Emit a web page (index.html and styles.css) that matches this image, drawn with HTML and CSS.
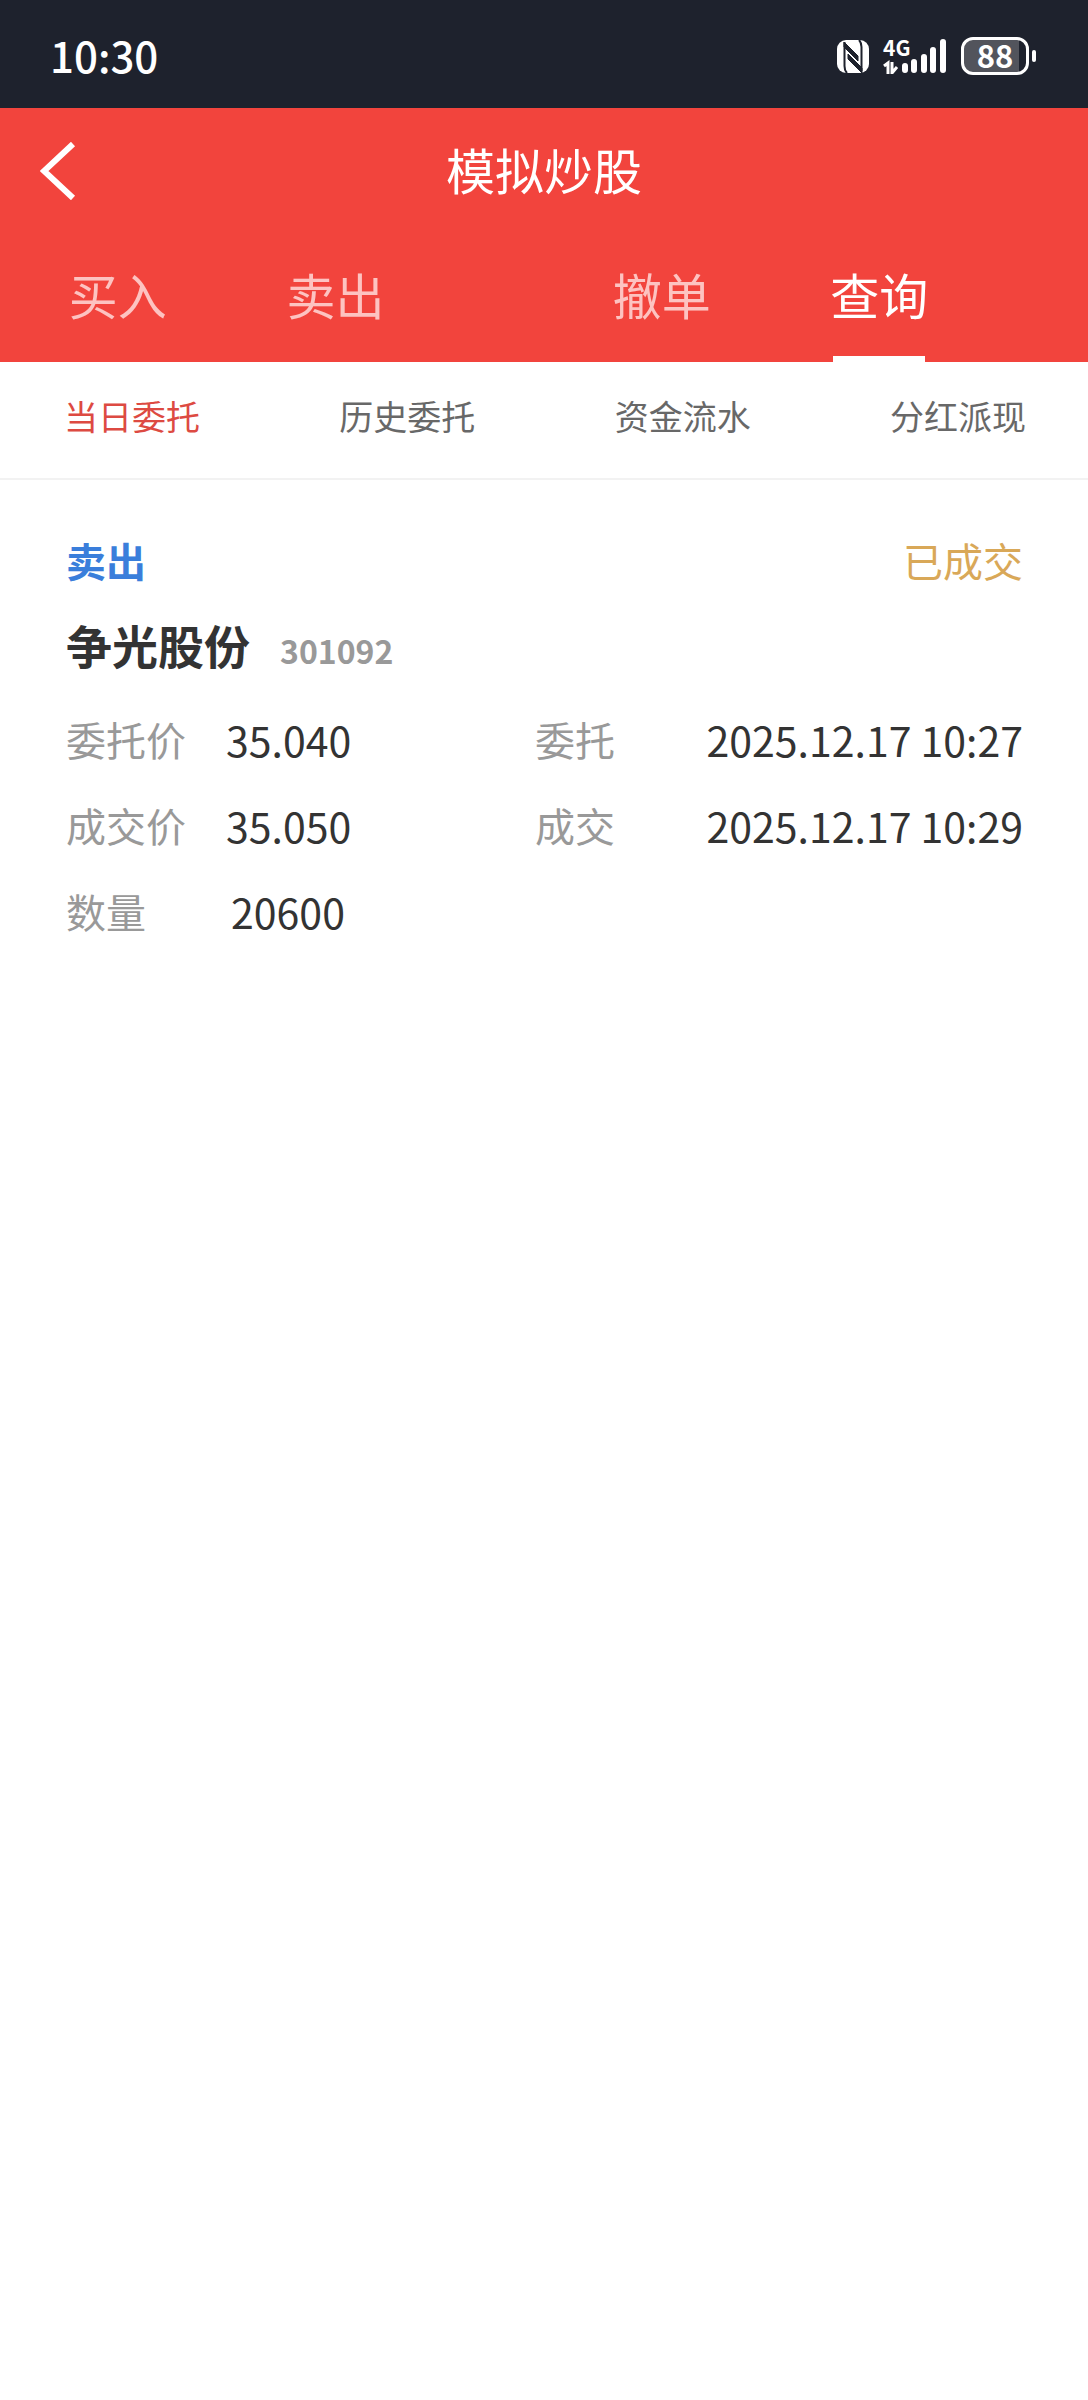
FILE: index.html
```html
<!DOCTYPE html>
<html lang="zh-CN">

<head>
    <meta charset="UTF-8">
    <meta name="viewport" content="width=device-width, initial-scale=1.0">
    <title>模拟炒股</title>
    <link rel="stylesheet" href="styles.css">
</head>

<body>

    <div class="status-bar">
        <time class="clock">10:30</time>

        <div class="status-icons">
            <svg class="icon-nfc" viewBox="0 0 32 33" width="32" height="33" aria-hidden="true">
                <rect width="32" height="33" rx="9" fill="#fff" />
                <path d="M10 33C8 31 7.500 29 7.500 26V2M22 0C24 2 24.500 4 24.500 7V31" fill="none" stroke="#1e222d" stroke-width="2" />
                <path d="M7 2L21 16V21L7 7ZM11 14L25 28V33L11 19Z" fill="#1e222d" stroke="#1e222d" stroke-width="1" />
            </svg>

            <div class="signal">
                <span class="network">4G</span>
                <svg class="icon-signal" viewBox="0 0 64 35" width="64" height="35" aria-hidden="true">
                    <path d="M1 27L5 24V35M9 23V34L14 28" fill="none" stroke="#fff" stroke-width="3" />
                    <path d="M22 27V31M31 23V31M41 18V31M50 11V31M60 3V31" stroke="#fff" stroke-width="6" stroke-linecap="round" />
                </svg>
            </div>

            <div class="battery">
                <span class="battery-level">88</span>
            </div>
        </div>
    </div>

    <header class="header">

        <div class="title-bar">
            <button class="back-button" type="button" aria-label="返回">
                <svg viewBox="0 0 36 58" width="36" height="58" aria-hidden="true">
                    <path d="M33 2L4 29L33 56" fill="none" stroke="#fff" stroke-width="6" />
                </svg>
            </button>
            <h1 class="title">模拟炒股</h1>
        </div>

        <nav class="tabs">
            <button class="tab" type="button">买入</button>
            <button class="tab" type="button">卖出</button>
            <button class="tab tab-cancel" type="button">撤单</button>
            <button class="tab active" type="button">查询</button>
        </nav>

    </header>

    <nav class="sub-tabs">
        <button class="sub-tab active" type="button">当日委托</button>
        <button class="sub-tab" type="button">历史委托</button>
        <button class="sub-tab" type="button">资金流水</button>
        <button class="sub-tab" type="button">分红派现</button>
    </nav>

    <main class="main-content">

        <article class="order">

            <div class="order-top">
                <span class="order-side">卖出</span>
                <span class="order-state">已成交</span>
            </div>

            <h2 class="stock">
                <span>争光股份</span>
                <span class="stock-code">301092</span>
            </h2>

            <dl class="details">
                <dt>委托价</dt>
                <dd class="number">35.040</dd>
                <dt>委托</dt>
                <dd class="date">2025.12.17 10:27</dd>

                <dt>成交价</dt>
                <dd class="number">35.050</dd>
                <dt>成交</dt>
                <dd class="date">2025.12.17 10:29</dd>

                <dt>数量</dt>
                <dd class="number">20600</dd>
            </dl>

        </article>

    </main>

</body>

</html>
```

FILE: styles.css
```css
/*      Variables       */
:root {
    --status-color: #1e222d;
    --red-color: #f2443d;
    --tab-color: #fdc3c1;
    --sub-active-color: #dd4a42;
    --sub-color: #686868;
    --line-color: #f2f2f2;
    --text-color: #333;
    --muted-color: #999;
    --sell-color: #3a7edb;
    --done-color: #d9a858;
}

/*      Reset Styles    */
html {
    box-sizing: border-box;
    font-family: "Noto Sans CJK SC", sans-serif;
}

body {
    margin: 0;
    background-color: #fff;
    color: var(--text-color);
}

*,
*::before,
*::after {
    box-sizing: inherit;
}

button {
    padding: 0;
    border: none;
    background: none;
    font: inherit;
    cursor: pointer;
}

h1,
h2,
dl,
dd {
    margin: 0;
}

/*      Status Bar      */
.status-bar {
    display: flex;
    justify-content: space-between;
    align-items: center;

    height: 108px;
    padding: 4px 52px 0 50px;
    background-color: var(--status-color);
    color: #fff;
}

.clock {
    padding-bottom: 4px;
    font-size: 42px;
    font-weight: 500;
}

.status-icons {
    display: flex;
    align-items: center;
    gap: 14px;
}

.signal {
    position: relative;
    display: flex;
}

.network {
    position: absolute;
    top: -4px;
    left: 0;
    font-size: 21px;
    font-weight: bold;
    line-height: 24px;
}

.battery {
    position: relative;
    display: grid;
    place-content: center;

    width: 68px;
    height: 38px;
    margin-right: 7px;
    padding-bottom: 2px;
    border: 3px solid #fff;
    border-radius: 12px;
    background: linear-gradient(to right, #52545c 88%, transparent 88%);
}

.battery::after {
    content: "";
    position: absolute;
    top: 10px;
    right: -10px;
    width: 4px;
    height: 12px;
    border-radius: 2px;
    background-color: #fff;
}

.battery-level {
    font-size: 31px;
    font-weight: bold;
    line-height: 30px;
}

/*      Header      */
.header {
    background-color: var(--red-color);
}

.title-bar {
    display: grid;
    grid-template-columns: 1fr auto 1fr;
    align-items: center;

    height: 126px;
    padding: 0 40px;
}

.back-button {
    display: flex;
    justify-self: start;
}

.title {
    padding-bottom: 4px;
    color: #fff;
    font-size: 49px;
    font-weight: normal;
    line-height: 72px;
}

.tabs {
    display: flex;
    height: 128px;
}

.tab {
    position: relative;
    width: 20%;
    padding: 0 0 10px 18px;
    color: var(--tab-color);
    font-size: 49px;
}

.tab-cancel {
    margin-left: 10%;
}

.tab.active {
    color: #fff;
}

.tab.active::after {
    content: "";
    position: absolute;
    bottom: 0;
    left: calc(50% - 37px);
    width: 92px;
    height: 6px;
    background-color: #fff;
}

/*      Sub Tabs      */
.sub-tabs {
    display: flex;
    justify-content: space-between;

    height: 118px;
    padding: 0 62px 0 64px;
    border-bottom: 2px solid var(--line-color);
}

.sub-tab {
    padding-bottom: 10px;
    color: var(--sub-color);
    font-size: 34px;
}

.sub-tab.active {
    color: var(--sub-active-color);
}

/*      Order      */
.order {
    padding: 50px 65px 50px 66px;
}

.order-top {
    display: flex;
    justify-content: space-between;

    font-size: 40px;
    line-height: 60px;
}

.order-side {
    color: var(--sell-color);
    font-weight: bold;
}

.order-state {
    color: var(--done-color);
}

.stock {
    display: flex;
    align-items: baseline;
    gap: 30px;

    margin-top: 20px;
    font-size: 46px;
    line-height: 68px;
}

.stock-code {
    color: var(--muted-color);
    font-size: 32px;
}

.details {
    display: grid;
    grid-template-columns: 160px 124px 1fr auto;
    row-gap: 26px;

    margin-top: 25px;
    font-size: 40px;
    line-height: 60px;
}

.details dt {
    color: var(--muted-color);
}

.details dd {
    font-size: 41px;
}

.details .number {
    text-align: center;
}

.details .date {
    text-align: right;
}

.details .number + dt {
    padding-left: 185px;
}
```
